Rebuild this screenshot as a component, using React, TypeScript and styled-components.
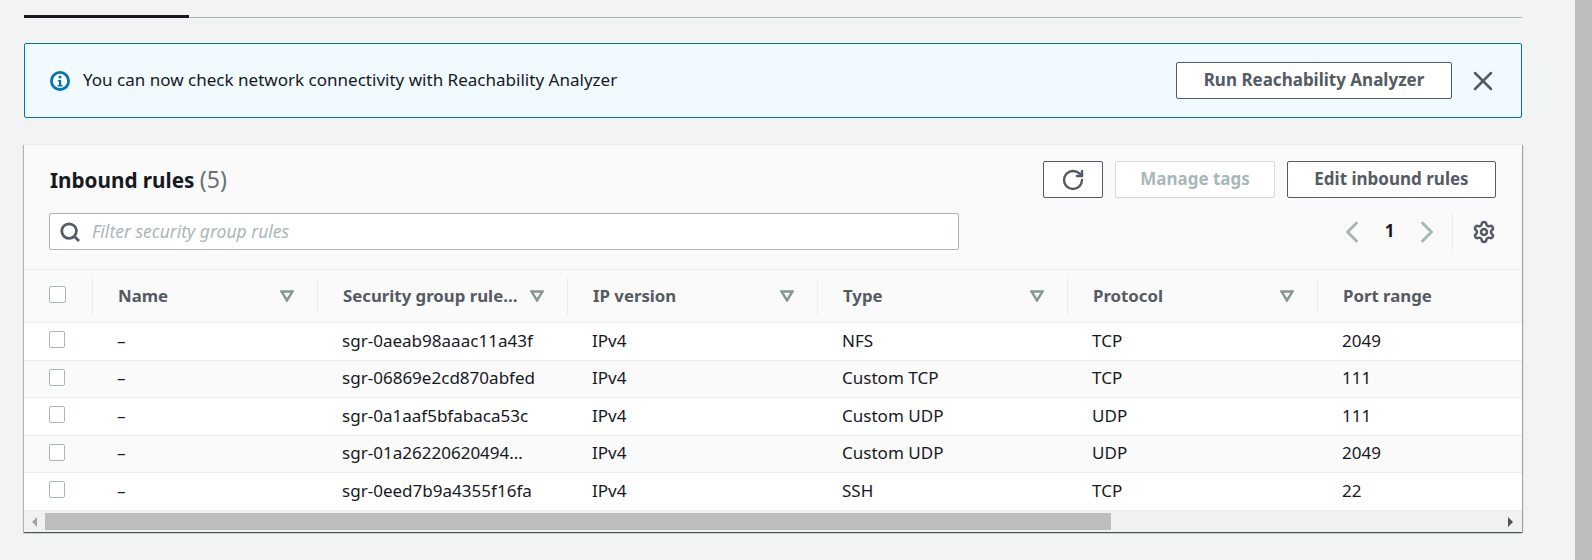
import React from 'react';
import styled, { createGlobalStyle, css } from 'styled-components';
import { RotateCw, Settings, ChevronLeft, ChevronRight, X, Search } from 'lucide-react';

const GlobalStyle = createGlobalStyle`
  html, body {
    margin: 0;
    padding: 0;
    background: #f2f3f3;
    overflow: hidden;
  }
  * { box-sizing: border-box; }
  body {
    font-family: 'Noto Sans', Roboto, sans-serif;
    font-size: 17.05px;
    color: #16191f;
  }
`;

const Page = styled.div`
  display: flex;
  width: 1592px;
  height: 560px;
`;

const Main = styled.main`
  flex: 1;
  min-width: 0;
  padding: 15px 53px 0 24px;
`;

const PageScrollbar = styled.div`
  width: 17px;
  background: #bebebe;
`;

const Tabs = styled.div`
  height: 3px;
  margin-bottom: 25px;
  border-bottom: 1px solid #aab7b8;
`;

const ActiveTab = styled.div`
  width: 165px;
  height: 3px;
  background: #16191f;
`;

const Alert = styled.section`
  display: flex;
  align-items: center;
  height: 75px;
  padding: 0 22px 0 25px;
  background: #f1faff;
  border: 1px solid #0073bb;
  border-radius: 2px;
  color: #16191f;
  margin-bottom: 26px;
`;

const AlertIcon = styled.svg`
  flex: none;
  width: 20px;
  height: 20px;
  margin-right: 13px;
`;

const AlertText = styled.span`
  flex: 1;
  padding-bottom: 2px;
`;

const Button = styled.button<{ $disabled?: boolean; $width?: number }>`
  height: 37px;
  padding: 0 0 3px;
  display: inline-flex;
  align-items: center;
  justify-content: center;
  width: ${(p) => p.$width || 160}px;
  background: #fff;
  border: 1px solid #545b64;
  border-radius: 2px;
  color: #545b64;
  font: 700 17px 'Noto Sans', Roboto, sans-serif;
  white-space: nowrap;
  ${(p) =>
    p.$disabled &&
    css`
      border-color: #d5dbdb;
      color: #aab7b8;
    `}
`;

const IconButton = styled(Button)`
  padding: 0;
`;

const CloseIcon = styled.span`
  display: flex;
  color: #545b64;
  margin-left: 15px;
`;

const Card = styled.section`
  height: 388px;
  background: #fafafa;
  box-shadow: 0 1px 1px 0 rgba(0, 28, 36, 0.5), 1px 1px 1px 0 rgba(0, 28, 36, 0.3), -1px 1px 1px 0 rgba(0, 28, 36, 0.22);
  border-top: 1px solid #eaeded;
  overflow: hidden;
`;

const CardHeader = styled.header`
  height: 125px;
  padding: 16px 26px 0 25px;
  border-bottom: 1px solid #eaeded;
`;

const HeaderTop = styled.div`
  display: flex;
  align-items: center;
  justify-content: space-between;
  height: 37px;
  margin-bottom: 15px;
`;

const Title = styled.h2`
  margin: 0 0 2px;
  padding-left: 1px;
  font-size: 20.7px;
  font-weight: 700;
  color: #16191f;
  span {
    font-size: 23px;
    font-weight: 400;
    color: #687078;
  }
`;

const Actions = styled.div`
  display: flex;
  gap: 12px;
`;

const HeaderBottom = styled.div`
  display: flex;
  align-items: center;
  justify-content: space-between;
`;

const Filter = styled.div`
  display: flex;
  align-items: center;
  width: 910px;
  height: 37px;
  padding: 0 9px;
  background: #fff;
  border: 1px solid #aab7b8;
  border-radius: 2px;
  color: #545b64;
`;

const FilterText = styled.span`
  margin-left: 11px;
  padding-bottom: 2px;
  font-style: italic;
  font-size: 17.5px;
  color: #aab7b8;
`;

const Pager = styled.div`
  display: flex;
  align-items: center;
  height: 37px;
  color: #aab7b8;
`;

const PageNumber = styled.span`
  width: 39px;
  text-align: center;
  font-weight: 700;
  color: #16191f;
  padding-bottom: 2px;
`;

const PagerSep = styled.div`
  width: 1px;
  height: 37px;
  margin: 0 19px 0 7px;
  background: #eaeded;
`;

const GearIcon = styled.span`
  display: flex;
  color: #545b64;
`;

const TableWrap = styled.div`
  overflow: hidden;
`;

const Row = styled.div<{ $head?: boolean; $alt?: boolean }>`
  display: grid;
  grid-template-columns: 68px 225px 250px 250px 250px 250px 250px;
  align-items: center;
  height: 37.5px;
  background: ${(p) => (p.$alt ? '#fafafa' : '#fff')};
  border-bottom: 1px solid #eaeded;
  ${(p) =>
    p.$head &&
    css`
      height: 53px;
      background: #fafafa;
    `}
`;

const Check = styled.span<{ $head?: boolean }>`
  display: block;
  width: ${(p) => (p.$head ? 17 : 16)}px;
  height: 17px;
  margin: 0 0 3px 25px;
  background: #fff;
  border: 1px solid #aab7b8;
  border-radius: 2px;
`;

const HeadCell = styled.div`
  display: flex;
  align-items: center;
  justify-content: space-between;
  height: 37px;
  padding: 0 23px 0 25px;
  border-left: 1px solid #eaeded;
  font-size: 16.8px;
  font-weight: 700;
  color: #545b64;
  white-space: nowrap;
`;

const HeadLabel = styled.span`
  padding-bottom: 2px;
`;

const FilterTriangle = styled.svg`
  flex: none;
  width: 14px;
  height: 12px;
`;

const Cell = styled.div`
  padding: 0 0 2px 25px;
  white-space: nowrap;
  color: #16191f;
`;

const ScrollBar = styled.div`
  display: flex;
  align-items: center;
  height: 22px;
  background: #f1f1f1;
`;

const ScrollArrow = styled.span<{ $right?: boolean }>`
  flex: none;
  width: 0;
  height: 0;
  border-top: 5px solid transparent;
  border-bottom: 5px solid transparent;
  ${(p) =>
    p.$right
      ? css`
          border-left: 5px solid #505050;
          margin-left: auto;
          margin-right: 9px;
        `
      : css`
          border-right: 5px solid #a3a3a3;
          margin-left: 8px;
          margin-right: 8px;
        `}
`;

const ScrollThumb = styled.div`
  width: 1066px;
  height: 17px;
  background: #bdbdbd;
`;

const columns = ['Name', 'Security group rule…', 'IP version', 'Type', 'Protocol', 'Port range'];

const rules = [
  ['–', 'sgr-0aeab98aaac11a43f', 'IPv4', 'NFS', 'TCP', '2049'],
  ['–', 'sgr-06869e2cd870abfed', 'IPv4', 'Custom TCP', 'TCP', '111'],
  ['–', 'sgr-0a1aaf5bfabaca53c', 'IPv4', 'Custom UDP', 'UDP', '111'],
  ['–', 'sgr-01a26220620494…', 'IPv4', 'Custom UDP', 'UDP', '2049'],
  ['–', 'sgr-0eed7b9a4355f16fa', 'IPv4', 'SSH', 'TCP', '22'],
];

export default function App() {
  return (
    <Page>
      <GlobalStyle />
      <Main>
        <Tabs>
          <ActiveTab />
        </Tabs>
        <Alert>
          <AlertIcon viewBox="0 0 20 20">
            <circle cx="10" cy="10" r="8.6" fill="#fff" stroke="#0073bb" strokeWidth="2.8" />
            <circle cx="10" cy="6" r="1.5" fill="#0073bb" />
            <path d="M7.8 9h3.4v5h1.4v1.5H7.6V14h1.4v-3.5H7.8z" fill="#0073bb" />
          </AlertIcon>
          <AlertText>You can now check network connectivity with Reachability Analyzer</AlertText>
          <Button $width={276}>Run Reachability Analyzer</Button>
          <CloseIcon>
            <X size={32} strokeWidth={1.9} />
          </CloseIcon>
        </Alert>
        <Card>
          <CardHeader>
            <HeaderTop>
              <Title>
                Inbound rules <span>(5)</span>
              </Title>
              <Actions>
                <IconButton $width={60}>
                  <RotateCw size={24} strokeWidth={2.4} />
                </IconButton>
                <Button $disabled $width={160}>
                  Manage tags
                </Button>
                <Button $width={209}>Edit inbound rules</Button>
              </Actions>
            </HeaderTop>
            <HeaderBottom>
              <Filter>
                <Search size={22} strokeWidth={3} />
                <FilterText>Filter security group rules</FilterText>
              </Filter>
              <Pager>
                <ChevronLeft size={36} strokeWidth={2} />
                <PageNumber>1</PageNumber>
                <ChevronRight size={36} strokeWidth={2} />
                <PagerSep />
                <GearIcon>
                  <Settings size={24} strokeWidth={2.5} />
                </GearIcon>
              </Pager>
            </HeaderBottom>
          </CardHeader>
          <TableWrap>
            <Row $head>
              <Check $head />
              {columns.map((c, i) => (
                <HeadCell key={c}>
                  <HeadLabel>{c}</HeadLabel>
                  {i < 5 && (
                    <FilterTriangle viewBox="0 0 14 12">
                      <path d="M1.5 1.5h11L7 10.5z" fill="none" stroke="#879596" strokeWidth="2.4" />
                    </FilterTriangle>
                  )}
                </HeadCell>
              ))}
            </Row>
            {rules.map((r, i) => (
              <Row key={r[1]} $alt={i % 2 === 1}>
                <Check />
                {r.map((v, j) => (
                  <Cell key={j}>{v}</Cell>
                ))}
              </Row>
            ))}
          </TableWrap>
          <ScrollBar>
            <ScrollArrow />
            <ScrollThumb />
            <ScrollArrow $right />
          </ScrollBar>
        </Card>
      </Main>
      <PageScrollbar />
    </Page>
  );
}
